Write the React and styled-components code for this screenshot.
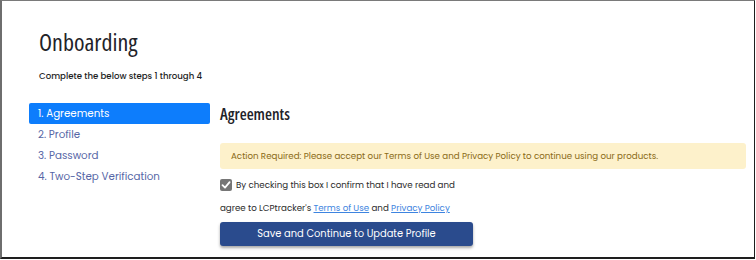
import React from "react";
import styled, { createGlobalStyle } from "styled-components";

const Global = createGlobalStyle`
  html, body { margin: 0; padding: 0; background: #ffffff; }
  body { font-family: "Poppins", "Open Sans", sans-serif; }
  * { box-sizing: border-box; }
`;

const Frame = styled.div`
  width: 755px;
  height: 259px;
  border-left: 2px solid #6e6e6e;
  border-top: 1px solid #7a7a7a;
  border-right: 1px solid #1e1e1e;
  border-bottom: 2px solid #1e1e1e;
  background: #fff;
  padding: 0 8px 0 27px;
  overflow: hidden;
`;

const Header = styled.header`
  padding: 25px 0 0 10px;
`;

const Title = styled.h1`
  margin: 0;
  font-family: "Open Sans", sans-serif;
  font-stretch: 75%;
  font-weight: 400;
  font-size: 24px;
  line-height: 32px;
  color: #1f2329;
`;

const Subtitle = styled.p`
  margin: 11px 0 0;
  font-family: "Poppins", "Open Sans", sans-serif;
  font-size: 8.6px;
  font-weight: 500;
  line-height: 14px;
  color: #1e1e1e;
`;

const Body = styled.div`
  display: grid;
  grid-template-columns: 181px 1fr;
  column-gap: 10px;
  margin-top: 20px;
`;

const Nav = styled.nav`
  display: flex;
  flex-direction: column;
`;

const NavItem = styled.div`
  height: 21px;
  display: flex;
  align-items: center;
  padding-left: 9px;
  border-radius: 2px;
  font-family: "Poppins", "Open Sans", sans-serif;
  font-size: 10.3px;
  color: ${(p) => (p.$active ? "#ffffff" : "#5666a6")};
  background: ${(p) => (p.$active ? "#0d7dfc" : "transparent")};
`;

const Content = styled.section`
  display: flex;
  flex-direction: column;
`;

const SectionTitle = styled.h2`
  margin: 0;
  height: 21px;
  display: flex;
  align-items: center;
  font-family: "Open Sans", sans-serif;
  font-stretch: 75%;
  font-weight: 600;
  font-size: 16px;
  color: #1f2329;
`;

const Alert = styled.div`
  margin-top: 19px;
  height: 26px;
  display: flex;
  align-items: center;
  padding-left: 11px;
  background: #fdf1cb;
  border-radius: 3px;
  font-family: "Poppins", "Open Sans", sans-serif;
  font-size: 8.7px;
  color: #8a6a16;
`;

const CheckRow = styled.label`
  margin-top: 8px;
  display: flex;
  align-items: center;
  gap: 4px;
  height: 16px;
  font-family: "Poppins", "Open Sans", sans-serif;
  font-size: 8.7px;
  color: #2a2a2a;
`;

const Box = styled.span`
  width: 12px;
  height: 12px;
  border-radius: 2px;
  background: #767676;
  display: inline-flex;
  align-items: center;
  justify-content: center;
`;

const AgreeLine = styled.p`
  margin: 7px 0 0;
  height: 16px;
  display: flex;
  align-items: center;
  white-space: pre;
  font-family: "Poppins", "Open Sans", sans-serif;
  font-size: 8.7px;
  color: #2a2a2a;
`;

const Link = styled.a`
  color: #3d84e0;
  text-decoration: underline;
`;

const Button = styled.button`
  margin-top: 6px;
  width: 253px;
  height: 24px;
  border: none;
  border-radius: 3px;
  background: #2a4b8d;
  color: #ffffff;
  font-family: "Poppins", "Open Sans", sans-serif;
  font-size: 9.9px;
  box-shadow: 0 2px 3px rgba(0, 0, 0, 0.35);
  padding: 0;
`;

export default function App() {
  const steps = ["1. Agreements", "2. Profile", "3. Password", "4. Two-Step Verification"];
  return (
    <>
      <Global />
      <Frame>
        <Header>
          <Title>Onboarding</Title>
          <Subtitle>Complete the below steps 1 through 4</Subtitle>
        </Header>
        <Body>
          <Nav>
            {steps.map((s, i) => (
              <NavItem key={s} $active={i === 0}>{s}</NavItem>
            ))}
          </Nav>
          <Content>
            <SectionTitle>Agreements</SectionTitle>
            <Alert>
              Action Required: Please accept our Terms of Use and Privacy Policy to continue using our products.
            </Alert>
            <CheckRow>
              <Box>
                <svg width="10" height="10" viewBox="0 0 10 10">
                  <path d="M1.5 5.2 L4 7.6 L8.6 2.2" fill="none" stroke="#fff" strokeWidth="1.8" strokeLinecap="round" strokeLinejoin="round" />
                </svg>
              </Box>
              By checking this box I confirm that I have read and
            </CheckRow>
            <AgreeLine>
              {"agree to LCPtracker's "}
              <Link>Terms of Use</Link>
              {" and "}
              <Link>Privacy Policy</Link>
            </AgreeLine>
            <div>
              <Button>Save and Continue to Update Profile</Button>
            </div>
          </Content>
        </Body>
      </Frame>
    </>
  );
}
